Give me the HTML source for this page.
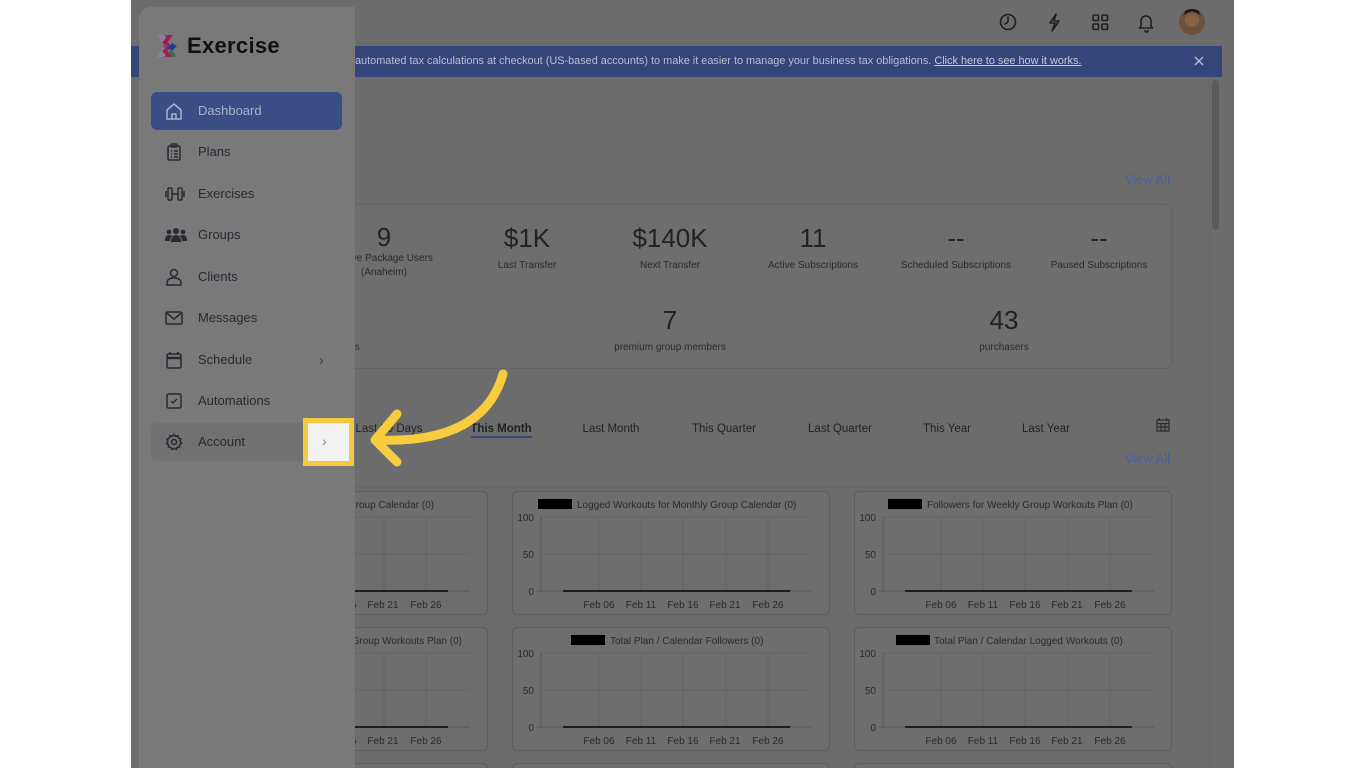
<!DOCTYPE html>
<html><head><meta charset="utf-8">
<style>
*{margin:0;padding:0;box-sizing:border-box}
html,body{width:1366px;height:768px;overflow:hidden}
body{background:#fff;font-family:"Liberation Sans",Arial,sans-serif;position:relative}
.app{position:absolute;left:131px;top:0;width:1103px;height:768px;background:#6c6c6c;overflow:hidden}
.banner{position:absolute;left:131px;top:46px;width:1091px;height:31px;background:#34457a;color:#b9bfd2;font-size:10.9px;line-height:31px;padding-left:224px;white-space:nowrap}
.banner u{color:#c4c9d8}
.side{position:absolute;left:139px;top:7px;width:216px;height:761px;background:#797979;border-radius:12px 0 0 0;overflow:hidden}
.logo{position:absolute;left:48px;top:26px;font-size:22px;color:#111;font-weight:bold;letter-spacing:0.3px}
.item{position:absolute;left:12px;width:191px;height:38px;border-radius:6px;font-size:13px;color:#262a33;line-height:38px;padding-left:47px}
.item svg{position:absolute;left:14px;top:10px}
.dash{background:#3a4e85;color:#aab3cb}
.acct{background:#717171}
</style></head><body>
<div class="app"></div>
<svg style="position:absolute;left:0;top:0" width="1366" height="768">
<g fill="none" stroke="#1e1e1e" stroke-width="1.6" stroke-linecap="round" stroke-linejoin="round">
<circle cx="1008" cy="22" r="7.5"/><path d="M1008 17v5l-3 2"/>
<path d="M1056 14l-6 9h5l-3 8 7-10h-5z"/>
<rect x="1093" y="15" width="5.5" height="5.5" rx="1"/><rect x="1102" y="15" width="5.5" height="5.5" rx="1"/><rect x="1093" y="24" width="5.5" height="5.5" rx="1"/><rect x="1102" y="24" width="5.5" height="5.5" rx="1"/>
<path d="M1141 26v-5a5 5 0 0 1 10 0v5l1.5 2h-13z"/><path d="M1145 30.5a1.5 1.5 0 0 0 3 0"/>
</g>
<circle cx="1192" cy="22" r="13" fill="#6b5140"/><circle cx="1192" cy="20" r="7" fill="#8a6246"/><path d="M1184 15q8-7 16 0l-1-4q-7-4-14 0z" fill="#1c1410"/>
</svg>
<div class="banner">automated tax calculations at checkout (US-based accounts) to make it easier to manage your business tax obligations. <u>Click here to see how it works.</u></div>
<svg style="position:absolute;left:0;top:0" width="1366" height="768" font-family="Liberation Sans, Arial, sans-serif">
<path d="M1195 57l8 8M1203 57l-8 8" stroke="#b9bfd2" stroke-width="1.4"/>
<line x1="1210" y1="78" x2="1210" y2="768" stroke="#646464"/>
<rect x="1212" y="80" width="7" height="150" rx="3.5" fill="#5a5a5a"/>
<text x="1170" y="184" font-size="13" fill="#4a5f9a" text-anchor="end">View All</text>
<rect x="170.5" y="204.5" width="1001" height="164" rx="6" fill="#6e6e6e" stroke="#636363"/>
<g fill="#222" text-anchor="middle">
<g font-size="26"><text x="384" y="246">9</text><text x="527" y="247">$1K</text><text x="670" y="247">$140K</text><text x="813" y="247">11</text><text x="956" y="247">--</text><text x="1099" y="247">--</text>
<text x="670" y="329">7</text><text x="1004" y="329">43</text></g>
<g font-size="10" fill="#2a2a2a"><text x="384" y="261">Active Package Users</text><text x="384" y="275">(Anaheim)</text><text x="527" y="268">Last Transfer</text><text x="670" y="268">Next Transfer</text><text x="813" y="268">Active Subscriptions</text><text x="956" y="268">Scheduled Subscriptions</text><text x="1099" y="268">Paused Subscriptions</text>
<text x="340" y="350">Products</text><text x="670" y="350">premium group members</text><text x="1004" y="350">purchasers</text></g>
</g>
<g font-size="11.5" fill="#222" text-anchor="middle">
<text x="389" y="432">Last 30 Days</text><text x="501" y="432" font-weight="bold">This Month</text><text x="611" y="432">Last Month</text><text x="724" y="432">This Quarter</text><text x="840" y="432">Last Quarter</text><text x="947" y="432">This Year</text><text x="1046" y="432">Last Year</text>
</g>
<rect x="471" y="436" width="61" height="2" fill="#34457a"/>
<g fill="none" stroke="#2a2a2a" stroke-width="1.2"><rect x="1157" y="420" width="12" height="11"/><path d="M1157 423.5h12M1161 423.5v7.5M1165 423.5v7.5M1157 427h12M1159.5 418v3M1166.5 418v3"/></g>
<text x="1170" y="463" font-size="13" fill="#4a5f9a" text-anchor="end">View All</text>
<line x1="170" y1="487" x2="1172" y2="487" stroke="#646464"/>
<defs>
<g id="ch" font-size="10">
<rect x="0.5" y="0.5" width="317" height="123" rx="5" fill="#6e6e6e" stroke="#5e5e5e"/>
<g stroke="#646464"><path d="M29 26h271M29 63h271M87 26v74M129 26v74M171 26v74M214 26v74M256 26v74"/></g>
<path d="M29 26v74M24 100h276" stroke="#5b5b5b"/>
<path d="M51 100h227" stroke="#1e1e1e" stroke-width="2"/>
<g fill="#2a2a2a" text-anchor="end"><text x="22" y="30">100</text><text x="22" y="67">50</text><text x="22" y="104">0</text></g>
<g fill="#2a2a2a" text-anchor="middle"><text x="87" y="117">Feb 06</text><text x="129" y="117">Feb 11</text><text x="171" y="117">Feb 16</text><text x="213" y="117">Feb 21</text><text x="256" y="117">Feb 26</text></g>
</g>
</defs>
<use href="#ch" x="170" y="491"/><use href="#ch" x="512" y="491"/><use href="#ch" x="854" y="491"/>
<use href="#ch" x="170" y="627"/><use href="#ch" x="512" y="627"/><use href="#ch" x="854" y="627"/>
<rect x="170.5" y="763.5" width="317" height="20" rx="5" fill="#6e6e6e" stroke="#5e5e5e"/>
<rect x="512.5" y="763.5" width="317" height="20" rx="5" fill="#6e6e6e" stroke="#5e5e5e"/>
<rect x="854.5" y="763.5" width="317" height="20" rx="5" fill="#6e6e6e" stroke="#5e5e5e"/>
<g font-size="10" fill="#2a2a2a">
<text x="434" y="508" text-anchor="end">Followers for Monthly Group Calendar (0)</text>
<rect x="538" y="499" width="34" height="10" fill="#000"/><text x="577" y="508">Logged Workouts for Monthly Group Calendar (0)</text>
<rect x="888" y="499" width="34" height="10" fill="#000"/><text x="927" y="508">Followers for Weekly Group Workouts Plan (0)</text>
<text x="462" y="644" text-anchor="end">Followers for Weekly Group Workouts Plan (0)</text>
<rect x="571" y="635" width="34" height="10" fill="#000"/><text x="610" y="644">Total Plan / Calendar Followers (0)</text>
<rect x="896" y="635" width="34" height="10" fill="#000"/><text x="934" y="644">Total Plan / Calendar Logged Workouts (0)</text>
</g>
</svg>
<div class="side">
<svg style="position:absolute;left:15px;top:26px" width="26" height="26" viewBox="0 0 26 26">
<path d="M3 2h8l7 11-7 11H3l7-11z" fill="#8d7f9a"/><path d="M10 2h6l-7 11 7 11h-6l7-11z" fill="#7b3f8f"/>
<path d="M14 2h5l-6 8 6 3-6 5 6 6h-5l-6-6 6-5-6-3z" fill="#9a1f4a"/><path d="M18 10l5 3-5 5-4-3z" fill="#1c3f9a"/><path d="M14 18l5 6h4l-5-6z" fill="#1f7a4a"/>
</svg>
<div class="logo">Exercise</div>
<div class="item dash" style="top:85px"><svg width="18" height="18" fill="none" stroke="#aab3cb" stroke-width="1.5" stroke-linejoin="round"><path d="M2 8l7-6 7 6v9H2z"/><path d="M7 17v-5h4v5"/></svg>Dashboard</div>
<div class="item" style="top:126px"><svg width="18" height="18" fill="none" stroke="#262a33" stroke-width="1.5"><rect x="3" y="3" width="12" height="14" rx="1.5"/><rect x="6" y="1" width="6" height="3" rx="1"/><path d="M6 8h1M9 8h4M6 11h1M9 11h4M6 14h1M9 14h4"/></svg>Plans</div>
<div class="item" style="top:168px"><svg width="20" height="18" fill="none" stroke="#262a33" stroke-width="1.5"><rect x="3" y="3" width="4" height="12" rx="1"/><rect x="13" y="3" width="4" height="12" rx="1"/><path d="M1 6v6M19 6v6M7 9h6"/></svg>Exercises</div>
<div class="item" style="top:209px"><svg width="22" height="18" fill="#262a33"><circle cx="11" cy="5" r="3"/><circle cx="4" cy="6" r="2.3"/><circle cx="18" cy="6" r="2.3"/><path d="M6 16q0-7 5-7t5 7z"/><path d="M0 15q0-6 4-6 2 0 3 1-2 2-2 5zM22 15q0-6-4-6-2 0-3 1 2 2 2 5z"/></svg>Groups</div>
<div class="item" style="top:251px"><svg width="18" height="18" fill="none" stroke="#262a33" stroke-width="1.5"><circle cx="9" cy="5" r="3.5"/><path d="M2 17v-2q0-5 7-5t7 5v2z"/></svg>Clients</div>
<div class="item" style="top:292px"><svg width="18" height="18" fill="none" stroke="#262a33" stroke-width="1.5"><rect x="1" y="3" width="16" height="12" rx="1.5"/><path d="M1.5 4l7.5 6 7.5-6"/></svg>Messages</div>
<div class="item" style="top:334px"><svg width="18" height="18" fill="none" stroke="#262a33" stroke-width="1.5"><rect x="2" y="3" width="14" height="14" rx="1.5"/><path d="M2 7h14" stroke-width="2.5"/><path d="M5 1v3M13 1v3"/></svg>Schedule<span style="position:absolute;left:168px;color:#3a3a3a;font-size:14px">›</span></div>
<div class="item" style="top:375px"><svg width="18" height="18" fill="none" stroke="#262a33" stroke-width="1.5"><rect x="2" y="2" width="14" height="14" rx="1.5"/><path d="M6 9l2 2 4-4"/></svg>Automations</div>
<div class="item acct" style="top:416px"><svg width="18" height="18" fill="none" stroke="#262a33" stroke-width="1.5"><circle cx="9" cy="9" r="2.5"/><path d="M9 1.5l1.6 1.8 2.4-.6.6 2.4 2.3.9-.8 2.3 1.4 2-2 1.4.1 2.4-2.4.2-1 2.2-2.2-1-2.2 1-1-2.2-2.4-.2.1-2.4-2-1.4 1.4-2-.8-2.3 2.3-.9.6-2.4 2.4.6z"/></svg>Account</div>
</div>
<div style="position:absolute;left:303px;top:418px;width:51px;height:48px;border:5px solid #f5c93e;background:#f2f2f2;color:#888;font-size:14px;line-height:36px;padding-left:14px">›</div>
<svg style="position:absolute;left:0;top:0" width="1366" height="768">
<g fill="none" stroke="#f7cd3f" stroke-width="9" stroke-linecap="round" stroke-linejoin="round">
<path d="M503 374q-20 70-125 66"/><path d="M397 414l-22 26 22 22"/>
</g></svg>
</body></html>
